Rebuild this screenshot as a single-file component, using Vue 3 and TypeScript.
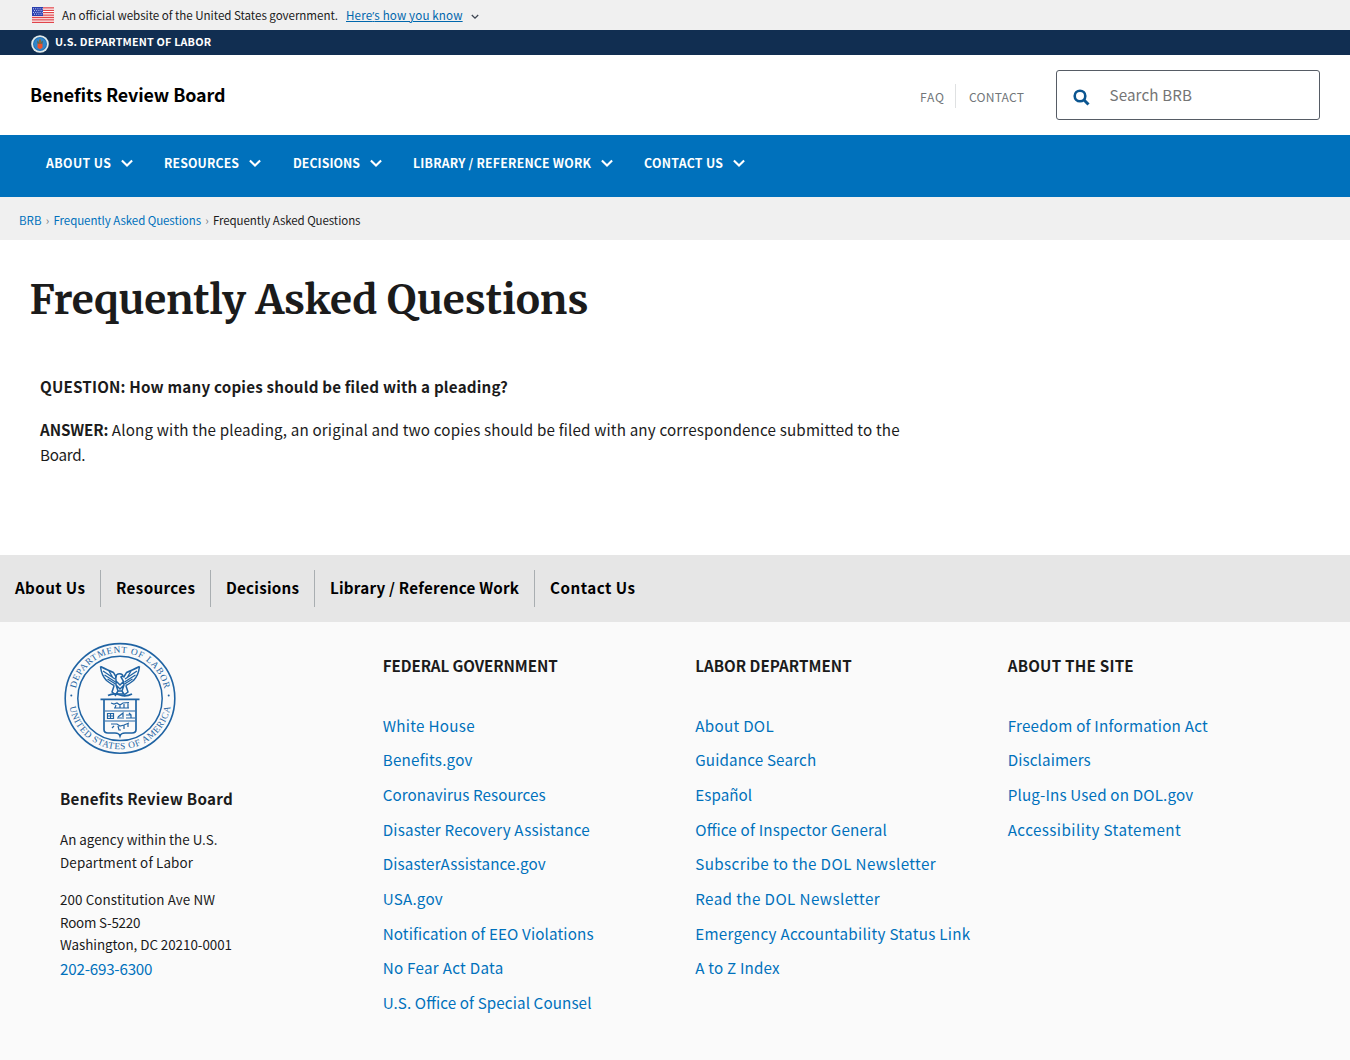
<script setup lang="ts">
interface NavItem {
  label: string
  slot: number
  text: number
  footer: number
}
interface FooterLink {
  label: string
  width: number
}
interface LinkColumn {
  title: FooterLink
  links: FooterLink[]
}

// Tracks a line of text so that it spans the given number of pixels.
const vFit = {
  mounted(el: HTMLElement, binding: { value: number }) {
    const range = document.createRange()
    range.selectNodeContents(el)
    const natural = range.getBoundingClientRect().width
    const gaps = (el.textContent || '').trim().length - 1
    el.style.letterSpacing = ((binding.value - natural) / gaps).toFixed(4) + 'px'
  },
}

const navItems: NavItem[] = [
  { label: 'About Us', slot: 118, text: 65, footer: 70 },
  { label: 'Resources', slot: 129, text: 75, footer: 79 },
  { label: 'Decisions', slot: 120, text: 67, footer: 73 },
  { label: 'Library / Reference Work', slot: 231, text: 178, footer: 189 },
  { label: 'Contact Us', slot: 120, text: 79, footer: 85 },
]

const columns: LinkColumn[] = [
  {
    title: { label: 'Federal Government', width: 175 },
    links: [
      { label: 'White House', width: 92 },
      { label: 'Benefits.gov', width: 90 },
      { label: 'Coronavirus Resources', width: 163 },
      { label: 'Disaster Recovery Assistance', width: 207 },
      { label: 'DisasterAssistance.gov', width: 163 },
      { label: 'USA.gov', width: 60 },
      { label: 'Notification of EEO Violations', width: 211 },
      { label: 'No Fear Act Data', width: 120.5 },
      { label: 'U.S. Office of Special Counsel', width: 209 },
    ],
  },
  {
    title: { label: 'Labor Department', width: 156.5 },
    links: [
      { label: 'About DOL', width: 78.5 },
      { label: 'Guidance Search', width: 121 },
      { label: 'Español', width: 57 },
      { label: 'Office of Inspector General', width: 192 },
      { label: 'Subscribe to the DOL Newsletter', width: 240.5 },
      { label: 'Read the DOL Newsletter', width: 184.5 },
      { label: 'Emergency Accountability Status Link', width: 275 },
      { label: 'A to Z Index', width: 84.5 },
    ],
  },
  {
    title: { label: 'About the Site', width: 126 },
    links: [
      { label: 'Freedom of Information Act', width: 200 },
      { label: 'Disclaimers', width: 83 },
      { label: 'Plug-Ins Used on DOL.gov', width: 185.5 },
      { label: 'Accessibility Statement', width: 173 },
    ],
  },
]
</script>

<template>
  <div class="page">
    <div class="banner">
      <svg class="flag" width="22" height="16" viewBox="0 0 22 16">
        <rect width="22" height="16" fill="#fff" />
        <path d="M0 .9h22M0 3.3h22M0 5.7h22M0 8.1h22M0 10.5h22M0 12.9h22M0 15.3h22" stroke="#e0444a" stroke-width="1.3" />
        <rect width="11" height="9" fill="#2a3fae" />
        <path d="M1 1.8h10M2 3.6h9M1 5.4h10M2 7.2h9" stroke="#dfe4ff" stroke-width=".9" stroke-dasharray="1 1.2" />
      </svg>
      <span class="banner-text"><span v-fit="276">An official website of the United States government.</span></span>
      <span class="banner-link"><a v-fit="116.5">Here<span class="apos">’</span>s how you know</a></span>
      <svg class="banner-chevron" width="8" height="6" viewBox="0 0 8 6"><path d="M.8 1l3.200 3.200L7.200 1" fill="none" stroke="#3d4551" stroke-width="1.3" /></svg>
    </div>

    <div class="dept">
      <svg width="18" height="18" viewBox="0 0 18 18">
        <circle cx="9" cy="9" r="8.8" fill="#e2eaea" />
        <circle cx="9" cy="9" r="7" fill="#2470b3" />
        <circle cx="9" cy="9" r="6" fill="#2f86cc" />
        <path d="M6 5.500Q7 6 8 7h2q1-1 2-1.500Q12 9 10.500 9.500h-3Q6 9 6 5.500z" fill="#5d6a5a" />
        <path d="M6.500 8.800h5v4L9 14.300l-2.500-1.500z" fill="#f0522b" />
        <path d="M8 4.500h2v4H8z" fill="#8a6a3b" />
      </svg>
      <span v-fit="156">U.S. DEPARTMENT OF LABOR</span>
    </div>

    <header class="header">
      <div class="site-name"><span v-fit="195.5">Benefits Review Board</span></div>
      <div class="secondary">
        <a class="faq"><span v-fit="24">FAQ</span></a>
        <a class="contact"><span v-fit="55">CONTACT</span></a>
      </div>
      <div class="search">
        <svg width="17" height="17" viewBox="0 0 17 17"><circle cx="7" cy="7" r="5.300" fill="none" stroke="#0b5590" stroke-width="2.600" /><path d="M10.800 10.800l4.700 4.700" stroke="#0b5590" stroke-width="3" /></svg>
        <span v-fit="82.5">Search BRB</span>
      </div>
    </header>

    <nav class="nav">
      <a v-for="item in navItems" :key="item.label" :style="{ width: item.slot + 'px' }">
        <span class="nav-label" :style="{ width: item.text + 'px' }"><span v-fit="item.text">{{ item.label }}</span></span>
        <svg width="12" height="9" viewBox="0 0 12 9"><path d="M.900 1.400L6 6.500l5.100-5.100" fill="none" stroke="#fff" stroke-width="2.100" /></svg>
      </a>
    </nav>

    <div class="crumbs">
      <a v-fit="22.5">BRB</a><i>›</i><a v-fit="147.5">Frequently Asked Questions</a><i>›</i><span v-fit="147.5">Frequently Asked Questions</span>
    </div>

    <main class="main">
      <h1><span v-fit="559">Frequently Asked Questions</span></h1>
      <p class="question"><b v-fit="468">QUESTION: How many copies should be filed with a pleading?</b></p>
      <p class="answer"><b v-fit="68.5">ANSWER:</b> <span v-fit="788">Along with the pleading, an original and two copies should be filed with any correspondence submitted to the</span><br><span v-fit="45.5">Board.</span></p>
    </main>

    <div class="footer-nav">
      <a v-for="item in navItems" :key="item.label" :style="{ width: item.footer + 31 + 'px' }"><span v-fit="item.footer">{{ item.label }}</span></a>
    </div>

    <footer class="footer">
      <section class="agency">
        <svg class="seal" width="112" height="112" viewBox="0 0 112 112">
          <defs>
            <path id="seal-top" d="M10.800 56a45.200 45.200 0 0 1 90.400 0" />
            <path id="seal-bottom" d="M4.700 56a51.300 51.300 0 0 0 102.600 0" />
          </defs>
          <g fill="none" stroke="#1f63a3">
            <circle cx="56" cy="56.400" r="54.800" stroke-width="1.600" />
            <circle cx="56" cy="56.400" r="42.200" stroke-width="1.500" />
            <path d="M36.500 24.500q1 9 6 14 5 4 8 5M75.500 24.500q-1 9-6 14-5 4-8 5" stroke-width="1.500" />
            <path d="M36.500 24.500q8 4 13 6l3 5M75.500 24.500q-8 4-13 6l-3 5" stroke-width="1.500" />
            <path d="M39 29l12 8M40.500 33l11 7M43.500 37l8 5M73 29l-12 8M71.500 33l-11 7M68.500 37l-8 5M45 29l4 7M67 29l-4 7" stroke-width="1.300" />
            <path d="M52 38q-1-5 2-6 4-1 5 2l-2 1q3 4 3 8l-2 6h-4l-2-6zM52 39l4 4 4-4M52 43l4 4 4-4M50 44l-2 6 4 3M62 44l2 6-4 3M54 49l-3 5M58 49l3 5M53 52h6" stroke-width="1.500" />
            <path d="M44 53.500q6-3 12-.500 6 2 12-1" stroke-width="1.800" />
            <path d="M36.500 57.300h39M40 58v29.500q0 3.500 4 3.500h7q4 0 5 3 1-3 5-3h7q4 0 4-3.500V58" stroke-width="1.700" />
            <path d="M41 69h30M41 79h30" stroke-width="1.200" />
            <path d="M47 61l3 1 3-1 3 2 3-2 6-.500M50 66h15M52 63l-1 3M56 63v3M60 62v4M64 61v5M43.500 71.500h6v5h-6zM46.500 71v6M43 74h7M53 76h7M54 75l5-4v4M62 73h5v3h4M62 76h8M65 71l2 2M47 82h6l3 2 4-1 5-2M50 84l-2 2M54 84l1 4h2M60 83v4M64 82v3" stroke-width="1.200" />
          </g>
          <g class="seal-text" fill="#2464a2">
            <text><textPath href="#seal-top" startOffset="9.500" textLength="123">DEPARTMENT OF LABOR</textPath></text>
            <text><textPath href="#seal-bottom" startOffset="9" textLength="143">UNITED STATES OF AMERICA</textPath></text>
            <circle cx="7.300" cy="53.500" r="1" /><circle cx="104.700" cy="53.500" r="1" />
          </g>
        </svg>
        <h3><span v-fit="173">Benefits Review Board</span></h3>
        <p class="within"><span v-fit="157.5">An agency within the U.S.</span><br><span v-fit="133">Department of Labor</span></p>
        <p class="address"><span v-fit="155">200 Constitution Ave NW</span><br><span v-fit="80.5">Room S-5220</span><br><span v-fit="172">Washington, DC 20210-0001</span></p>
        <div class="phone"><a v-fit="92.5">202-693-6300</a></div>
      </section>
      <section v-for="column in columns" :key="column.title.label" class="column">
        <h3><span v-fit="column.title.width">{{ column.title.label }}</span></h3>
        <ul>
          <li v-for="link in column.links" :key="link.label"><a v-fit="link.width">{{ link.label }}</a></li>
        </ul>
      </section>
    </footer>
  </div>
</template>

<style>
body { margin: 0; }
</style>

<style scoped>
* { box-sizing: border-box; }
.page {
  width: 1350px; height: 1060px; overflow: hidden; background: #fff; color: #1b1b1b;
  font-family: "Source Sans Pro", "Noto Sans CJK SC", sans-serif; font-size: 15.200px;
  font-feature-settings: "liga" 1;
}
svg { display: block; flex: none; }
span, a, h3, p { white-space: nowrap; }
.banner { height: 30px; background: #f0f0f0; display: flex; align-items: flex-start; padding-left: 32px; font-size: 11.600px; line-height: 30px; }
.flag { margin: 7px 8px 0 0; }
.banner-text { width: 284px; }
.banner-link { color: #0067ad; text-decoration: underline; width: 125px; }
.apos { font-family: "Open Sans", sans-serif; }
.banner-chevron { margin-top: 14px; }
.dept { height: 25px; background: #112e51; color: #fff; display: flex; padding-left: 31px; font-size: 10.800px; font-weight: 700; line-height: 23px; }
.dept svg { margin: 5px 6px 0 0; }
.header { height: 80px; display: flex; padding: 15px 30px 0; }
.site-name { width: 890px; color: #000; font-weight: 700; font-size: 17.900px; line-height: 48px; }
.secondary { display: flex; align-items: flex-start; width: 136px; color: #71767a; font-size: 12.100px; padding-top: 14px; }
.faq { width: 36px; height: 24px; line-height: 26px; border-right: 1px solid #dfe1e2; }
.contact { padding-left: 13px; line-height: 26px; }
.search { width: 264px; height: 50px; border: 1px solid #565c65; border-radius: 3px; display: flex; padding-left: 16px; color: #757575; line-height: 46px; }
.search svg { margin: 18px 19.500px 0 0; }
.nav { height: 62px; background: #0071bc; display: flex; padding-left: 46px; color: #fff; font-size: 12.300px; font-weight: 700; line-height: 56px; text-transform: uppercase; }
.nav a { display: flex; flex: none; }
.nav svg { margin: 24px 0 0 10px; }
.crumbs { height: 43px; background: #f0f0f0; padding-left: 19px; font-size: 11.500px; line-height: 47px; display: flex; }
.crumbs a { color: #0071bc; }
.crumbs i { font-style: normal; color: #71767a; width: 12px; text-align: center; }
.main { height: 315px; padding: 30px 30px 0; }
h1 { margin: 0 0 0 -.600px; font-family: Merriweather, "DejaVu Serif Condensed", "DejaVu Serif", serif; font-size: 40.600px; line-height: 59px; font-weight: 700; white-space: nowrap; }
.question { margin: 44px 0 0 10px; line-height: 26px; }
.answer { margin: 18px 0 0 10px; line-height: 25px; }
.footer-nav { height: 67px; background: #e6e6e6; display: flex; padding-top: 15px; color: #000; font-weight: 700; line-height: 35px; }
.footer-nav a { padding: 0 15px; height: 37px; border-right: 1px solid #a9aeb1; }
.footer-nav a:last-child { border: 0; }
.footer { height: 438px; background: #fafafa; display: flex; }
.agency { width: 382.700px; padding: 20px 0 0 60px; }
.seal { margin-left: 4px; }
.seal-text { font: 9.300px "Liberation Serif", serif; }
h3 { margin: 0; font-size: 15.200px; line-height: 24px; }
.agency h3 { margin-top: 32px; }
.agency p { margin: 18px 0 0; font-size: 13.400px; line-height: 22.500px; }
.agency .address { margin-top: 15px; }
.phone { color: #0071bc; line-height: 24px; }
.column { width: 312.500px; padding-top: 31px; }
.column h3 { text-transform: uppercase; }
.column ul { list-style: none; margin: 30.800px 0 0; padding: 0; }
.column li { height: 34.640px; line-height: 34px; color: #0071bc; }
</style>
